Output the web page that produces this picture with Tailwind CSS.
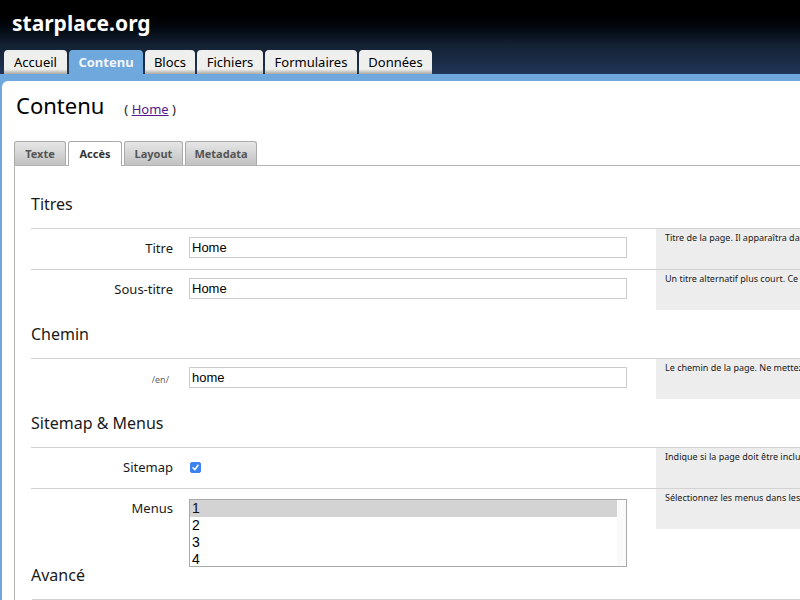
<!DOCTYPE html>
<html lang="fr">
<head>
<meta charset="utf-8">
<title>starplace.org</title>
<script src="https://cdn.jsdelivr.net/npm/@tailwindcss/browser@4"></script>
</head>
<body class="min-h-screen overflow-x-hidden bg-[#6fa8dc] font-['Noto_Sans','Open_Sans',sans-serif] text-[13px] text-[#1a1a1a]">
<header class="bg-linear-to-b from-black from-10% via-[#142132] via-60% to-[#213557]">
  <div class="flex h-[50px] items-center px-3 pb-1">
    <a href="#" class="text-[21px] leading-7 font-bold text-white">starplace.org</a>
  </div>
  <nav class="flex h-6 gap-[2px] px-1 text-center leading-6 text-black" aria-label="Principal">
    <a href="#" class="w-[63px] rounded-t bg-linear-to-b from-[#efefed] from-80% to-[#aaa9a5]">Accueil</a>
    <a href="#" class="w-[74px] rounded-t bg-[#6fa8dc] font-bold text-[#f2f6fa]" aria-current="page">Contenu</a>
    <a href="#" class="w-[50px] rounded-t bg-linear-to-b from-[#efefed] from-80% to-[#aaa9a5]">Blocs</a>
    <a href="#" class="w-[66px] rounded-t bg-linear-to-b from-[#efefed] from-80% to-[#aaa9a5]">Fichiers</a>
    <a href="#" class="w-[92px] rounded-t bg-linear-to-b from-[#efefed] from-80% to-[#aaa9a5]">Formulaires</a>
    <a href="#" class="w-[73px] rounded-t bg-linear-to-b from-[#efefed] from-80% to-[#aaa9a5]">Données</a>
  </nav>
</header>
<main class="mt-[7px] ml-[2px] min-h-screen rounded-tl-md bg-white pl-3">
  <div class="flex h-[60px] items-baseline gap-5 pt-2 pl-[2px]">
    <h1 class="text-[22px] leading-8 text-black">Contenu</h1>
    <span>( <a href="#" class="text-[#551a8b] underline">Home</a> )</span>
  </div>
  <nav class="flex h-6 gap-[2px] text-center text-[11px] leading-6 font-bold text-[#555]" aria-label="Page">
    <a href="#" class="w-[52px] rounded-t-[3px] border border-b-0 border-[#aaa] bg-linear-to-b from-[#e6e6e6] to-[#c2c2c2]">Texte</a>
    <a href="#" class="z-10 -mb-px w-[54px] rounded-t-[3px] border border-b-0 border-[#aaa] bg-white text-[#333]" aria-current="page">Accès</a>
    <a href="#" class="w-[59px] rounded-t-[3px] border border-b-0 border-[#aaa] bg-linear-to-b from-[#e6e6e6] to-[#c2c2c2]">Layout</a>
    <a href="#" class="w-[72px] rounded-t-[3px] border border-b-0 border-[#aaa] bg-linear-to-b from-[#e6e6e6] to-[#c2c2c2]">Metadata</a>
  </nav>
  <form class="border-t border-l border-[#b3b3b3] pt-[14px] pl-4">
    <h2 class="text-base leading-[48px]">Titres</h2>
    <div class="flex h-[41px] items-start border-t border-[#d2d2d2] pl-px">
      <label for="titre" class="mt-[9px] w-[149px] shrink-0 pr-2 text-right leading-5">Titre</label>
      <input id="titre" type="text" value="Home" class="mt-2 ml-2 h-[21px] min-w-0 flex-1 border border-[#ccc] px-[2px] font-['Liberation_Sans',sans-serif] text-black">
      <p class="ml-[29px] h-10 w-36 shrink-0 overflow-hidden bg-[#ededed] pt-px pl-[9px] text-[9px] leading-4 whitespace-nowrap">Titre de la page. Il apparaîtra dans</p>
    </div>
    <div class="flex h-[41px] items-start border-t border-[#d2d2d2] pl-px">
      <label for="sous" class="mt-[9px] w-[149px] shrink-0 pr-2 text-right leading-5">Sous-titre</label>
      <input id="sous" type="text" value="Home" class="mt-2 ml-2 h-[21px] min-w-0 flex-1 border border-[#ccc] px-[2px] font-['Liberation_Sans',sans-serif] text-black">
      <p class="ml-[29px] h-10 w-36 shrink-0 overflow-hidden bg-[#ededed] pt-px pl-[9px] text-[9px] leading-4 whitespace-nowrap">Un titre alternatif plus court. Ce</p>
    </div>
    <h2 class="text-base leading-[48px]">Chemin</h2>
    <div class="flex h-[41px] items-start border-t border-[#d2d2d2] pl-px">
      <label for="chemin" class="mt-[11px] w-[149px] shrink-0 pr-3 text-right text-[9px] leading-5 text-[#666]">/en/</label>
      <input id="chemin" type="text" value="home" class="mt-2 ml-2 h-[21px] min-w-0 flex-1 border border-[#ccc] px-[2px] font-['Liberation_Sans',sans-serif] text-black">
      <p class="ml-[29px] h-10 w-36 shrink-0 overflow-hidden bg-[#ededed] pt-px pl-[9px] text-[9px] leading-4 whitespace-nowrap">Le chemin de la page. Ne mettez</p>
    </div>
    <h2 class="text-base leading-[48px]">Sitemap &amp; Menus</h2>
    <div class="flex h-[41px] items-start border-t border-[#d2d2d2] pl-px">
      <label for="sitemap" class="mt-[9px] w-[149px] shrink-0 pr-2 text-right leading-5">Sitemap</label>
      <div class="flex flex-1 pt-[14px] pl-[9px]">
        <span class="grid size-[11px]">
          <input id="sitemap" type="checkbox" checked class="peer col-start-1 row-start-1 size-[11px] appearance-none rounded-xs border border-[#aaa] checked:border-[#3b82f0] checked:bg-[#3b82f0]">
          <svg viewBox="0 0 11 11" class="pointer-events-none invisible col-start-1 row-start-1 size-[11px] peer-checked:visible" fill="none" stroke="white" stroke-width="1.5" stroke-linecap="round" stroke-linejoin="round" aria-hidden="true"><path d="M3 5.8 4.8 7.7 8 3.2"/></svg>
        </span>
      </div>
      <p class="ml-[29px] h-10 w-36 shrink-0 overflow-hidden bg-[#ededed] pt-px pl-[9px] text-[9px] leading-4 whitespace-nowrap">Indique si la page doit être incluse</p>
    </div>
    <div class="flex h-[63px] items-start border-t border-[#d2d2d2] pl-px">
      <label for="menus" class="mt-[9px] w-[149px] shrink-0 pr-2 text-right leading-5">Menus</label>
      <select id="menus" multiple size="4" class="mt-[10px] ml-2 h-[68px] min-w-0 flex-1 overflow-hidden border border-[#a9a9a9] bg-white bg-linear-to-l from-[#fafafa] from-[9px] to-white to-[9px] pr-[9px] font-['Liberation_Sans',sans-serif] text-sm leading-4 text-black">
        <option selected class="h-[17px] bg-[#d3d3d3] px-[2px] py-0">1</option>
        <option class="h-4 px-[2px] py-0">2</option>
        <option class="h-[17px] px-[2px] py-0">3</option>
        <option class="h-4 px-[2px] py-0">4</option>
      </select>
      <p class="ml-[29px] h-10 w-36 shrink-0 overflow-hidden bg-[#ededed] pt-px pl-[9px] text-[9px] leading-4 whitespace-nowrap">Sélectionnez les menus dans lesquels</p>
    </div>
    <h2 class="text-base leading-[48px]">Avancé</h2>
    <div class="ml-px border-t border-[#d2d2d2]"></div>
  </form>
</main>
</body>
</html>
